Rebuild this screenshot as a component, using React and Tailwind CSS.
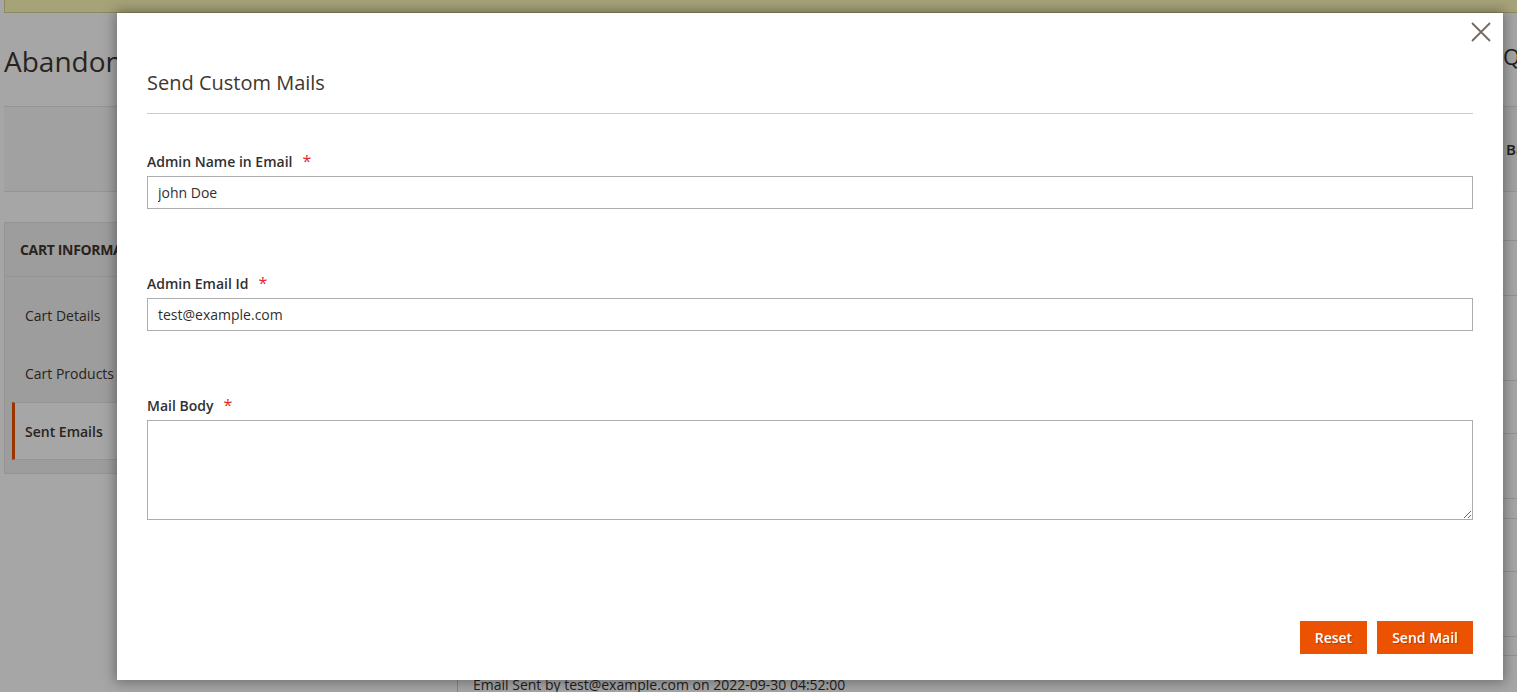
import React from "react";

const sideItems = [
  { label: "Cart Details" },
  { label: "Cart Products" },
  { label: "Sent Emails", active: true },
];

// main column rows behind the modal, only a thin strip shows on the right
const rowHeights = [19, 55, 85, 53, 65, 20, 53, 65, 19];

const Field = ({ label, children }) => (
  <div className="flex flex-col">
    <label className="mb-[4px] flex h-[21px] items-end text-[14px] font-semibold leading-[20px] text-[#303030]">
      {label}
      <span className="mb-[3px] ml-[10px] text-[16px] font-normal leading-[16px] text-[#e22626]">*</span>
    </label>
    {children}
  </div>
);

const App = () => {
  return (
    <div className="relative h-[692px] w-full overflow-hidden bg-white font-['Open_Sans',_sans-serif] text-[#303030]">
      {/* page behind the modal */}
      <div className="w-[1640px] pl-[4px]">
        <div className="h-[13px] border-b border-l border-[#d6d396] bg-[#fffbbb]" />

        <div className="flex h-[93px] items-start pt-[28px]">
          <h1 className="w-[1499px] shrink-0 text-[28px] font-normal leading-[40px] text-[#41362f]">
            Abandoned Cart Details
          </h1>
          <span className="text-[22px] leading-[30px] text-[#303030]">Q</span>
        </div>

        <div className="flex h-[86px] items-center border-y border-[#e3e3e3] bg-[#f8f8f8]">
          <span className="ml-[1502px] text-[15px] font-semibold text-[#303030]">Back</span>
        </div>

        <div className="mt-[30px] flex">
          <div className="w-[430px] shrink-0 self-start border border-[#e3e3e3] bg-[#f1f1f1]">
            <div className="flex h-[54px] items-center border-b border-[#e3e3e3] px-[15px] text-[14px] font-bold uppercase tracking-tight text-[#41362f]">
              Cart Information
            </div>
            <div className="pb-[13px] pt-[9px]">
              {sideItems.map((it) => (
                <div
                  key={it.label}
                  className={`ml-[7px] flex h-[58px] items-center text-[14px] ${
                    it.active
                      ? "border-y border-l-[3px] border-[#e3e3e3] border-l-[#eb5202] bg-white pl-[10px] font-semibold text-[#41362f]"
                      : "pl-[13px] text-[#41362f]"
                  }`}
                >
                  {it.label}
                </div>
              ))}
            </div>
          </div>

          <div className="ml-[23px] flex-1">
            {rowHeights.map((h, i) => (
              <div
                key={i}
                className="border-b border-[#e3e3e3]"
                style={{ height: h }}
              />
            ))}
            <div className="mt-[15px] border-l border-[#cccccc] pl-[15px] pt-[4px] text-[14px] leading-[20px] text-[#303030]">
              Email Sent by test@example.com on 2022-09-30 04:52:00
            </div>
          </div>
        </div>
      </div>

      {/* overlay */}
      <div className="absolute inset-0 bg-black/35" />

      {/* modal */}
      <div className="absolute left-[117px] top-[13px] flex h-[667px] w-[1386px] flex-col bg-white px-[30px] pb-[26px] shadow-[0_0_12px_2px_rgba(0,0,0,0.35)]">
        <button
          className="absolute right-[12px] top-[9px] flex h-[20px] w-[20px] items-center justify-center"
          aria-label="Close"
        >
          <svg width="20" height="20" viewBox="0 0 20 20">
            <path d="M1 1 L19 19 M19 1 L1 19" stroke="#736963" strokeWidth="1.8" fill="none" />
          </svg>
        </button>

        <div className="border-b border-[#cccccc] pb-[16px] pt-[56px]">
          <h2 className="text-[20px] font-normal leading-[28px] text-[#41362f]">Send Custom Mails</h2>
        </div>

        <div className="mt-[37px] flex flex-col gap-[64px]">
          <Field label="Admin Name in Email">
            <input
              defaultValue="john Doe"
              className="h-[33px] w-full border border-[#adadad] px-[10px] text-[14px] text-[#303030] outline-none"
            />
          </Field>
          <Field label="Admin Email Id">
            <input
              defaultValue="test@example.com"
              className="h-[33px] w-full border border-[#adadad] px-[10px] text-[14px] text-[#303030] outline-none"
            />
          </Field>
          <Field label="Mail Body">
            <textarea className="block h-[100px] w-full border border-[#adadad] px-[10px] py-[6px] text-[14px] outline-none" />
          </Field>
        </div>

        <div className="mt-auto flex justify-end gap-[10px]">
          <button className="h-[33px] bg-[#eb5202] px-[15px] text-[14px] font-semibold text-white [text-shadow:1px_1px_0_rgba(0,0,0,0.25)]">
            Reset
          </button>
          <button className="h-[33px] bg-[#eb5202] px-[15px] text-[14px] font-semibold text-white [text-shadow:1px_1px_0_rgba(0,0,0,0.25)]">
            Send Mail
          </button>
        </div>
      </div>
    </div>
  );
};

export default App;
